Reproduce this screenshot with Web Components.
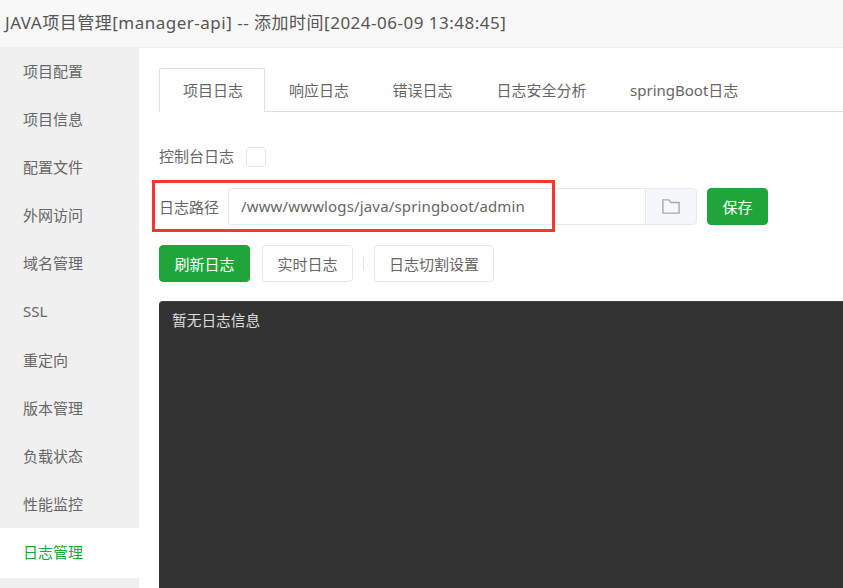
<!DOCTYPE html>
<html>
<head>
<meta charset="utf-8">
<style>
  html, body { margin: 0; height: 100%; overflow: hidden; background: #fff; }
  body { font-family: "Noto Sans", "Noto Sans CJK SC", sans-serif; font-size: 15px; color: #666; }
</style>
</head>
<body>
<project-dialog title-text="JAVA项目管理[manager-api] -- 添加时间[2024-06-09 13:48:45]">
  <side-menu slot="menu" active="日志管理" items="项目配置,项目信息,配置文件,外网访问,域名管理,SSL,重定向,版本管理,负载状态,性能监控,日志管理,"></side-menu>
  <log-panel></log-panel>
</project-dialog>

<script>
class ProjectDialog extends HTMLElement {
  constructor() {
    super();
    this.attachShadow({ mode: 'open' });
    this.shadowRoot.innerHTML = `
      <style>
        :host { display: flex; flex-direction: column; height: 588px; width: 843px; overflow: hidden; }
        .head { height: 42px; padding-bottom: 5px; flex: none; box-sizing: content-box; background: #f8f8f8; border-bottom: 1px solid #eee;
          display: flex; align-items: center; padding-left: 5px; font-size: 17px; letter-spacing: .5px; color: #555; white-space: nowrap; }
        .body { flex: 1; display: flex; min-height: 0; }
        .content { flex: 1; min-width: 0; padding: 20px 0 0 20px; overflow: hidden; }
      </style>
      <div class="head">${this.getAttribute('title-text')}</div>
      <div class="body">
        <slot name="menu"></slot>
        <div class="content"><slot></slot></div>
      </div>`;
  }
}

class SideMenu extends HTMLElement {
  connectedCallback() {
    const active = this.getAttribute('active');
    const items = this.getAttribute('items').split(',');
    const root = this.attachShadow({ mode: 'open' });
    root.innerHTML = `
      <style>
        :host { display: block; width: 139px; flex: none; background: #f0f0f0; }
        .item { height: 48.1px; line-height: 47px; padding-left: 23px; color: #666; box-sizing: border-box; }
        .item.on { background: #fff; color: #20a53a; margin-top: -1px; padding-top: 1px; height: 50px; }
      </style>
      ${items.map(i => `<div class="item ${i === active ? 'on' : ''}">${i}</div>`).join('')}`;
  }
}

class LogTabs extends HTMLElement {
  connectedCallback() {
    const root = this.attachShadow({ mode: 'open' });
    const tabs = ['项目日志', '响应日志', '错误日志', '日志安全分析', 'springBoot日志'];
    root.innerHTML = `
      <style>
        :host { display: flex; height: 44px; box-sizing: border-box; border-bottom: 1px solid #dcdfe6; }
        .tab { height: 44px; box-sizing: border-box; line-height: 43px; padding: 0 21px; color: #666; white-space: nowrap; border: 1px solid transparent; border-bottom: 0; }
        .tab.on { background: #fff; border-color: #dcdfe6; border-radius: 2px 2px 0 0; padding: 0 21px 0 23px; }
        .tab.second { padding: 0 20.5px 0 23px; }
        .tab.fourth { padding: 0 20.5px 0 21px; }
      </style>
      ${tabs.map((t, i) => `<div class="tab ${['on', 'second', '', 'fourth', ''][i]}">${t}</div>`).join('')}`;
  }
}

class GreenButton extends HTMLElement {
  constructor() {
    super();
    this.attachShadow({ mode: 'open' }).innerHTML = `
      <style>
        :host { display: inline-flex; align-items: center; justify-content: center; box-sizing: border-box; height: 37px; padding: 0 14.5px;
          border: 1px solid #e4e7ed; border-radius: 4px; background: #fff; color: #666; white-space: nowrap; }
        :host([primary]) { background: #20a53a; border-color: #20a53a; color: #fff; }
      </style>
      <slot></slot>`;
  }
}

class LogPanel extends HTMLElement {
  constructor() {
    super();
    this.attachShadow({ mode: 'open' }).innerHTML = `
      <style>
        :host { display: block; position: relative; }
        .check-row { display: flex; align-items: center; height: 20px; margin-top: 35px; color: #666; }
        .check-row span:first-child { margin-top: -4px; }
        .check { width: 20px; height: 20px; box-sizing: border-box; margin-left: 12px; border: 1px solid #e4e7ed; border-radius: 3px; background: #fff; }
        .path-row { display: flex; align-items: center; margin-top: 21px; height: 37px; }
        .label { width: 69px; flex: none; color: #666; }
        .input { width: 417px; height: 37px; box-sizing: border-box; padding-left: 12px; line-height: 35px; letter-spacing: .15px; border: 1px solid #e8eaef; border-right: 0; border-radius: 4px 0 0 4px; color: #666; }
        .pick { width: 52px; height: 37px; box-sizing: border-box; border: 1px solid #e8eaef; border-radius: 0 4px 4px 0; background: #f5f7fa; display: flex; align-items: center; justify-content: center; }
        .save { margin-left: 10px; width: 61px; padding: 0; }
        .tools { display: flex; align-items: center; margin-top: 20px; }
        .tools .rt { margin-left: 12px; }
        .sep { width: 1px; height: 13px; background: #dcdfe6; margin: 0 10px; }
        .log { margin-top: 19px; height: 400px; background: #333; border-radius: 4px 0 0 0; border-top: 1px solid #444; box-sizing: border-box; padding: 8px 13px; color: #dcdcdc; font-size: 14.7px; line-height: 20px; }
        .mark { position: absolute; left: -7px; top: 112px; width: 403px; height: 52px; box-sizing: border-box; border: 3px solid #fb3333; pointer-events: none; }
      </style>
      <log-tabs></log-tabs>
      <div class="check-row"><span>控制台日志</span><span class="check"></span></div>
      <div class="path-row">
        <span class="label">日志路径</span>
        <div class="input">/www/wwwlogs/java/springboot/admin</div>
        <div class="pick">
          <svg width="18" height="15" viewBox="0 0 18 15" fill="none" stroke="#a9a9ae" stroke-width="1.4"><path d="M.9.9h6l2 2.6h8.2v10.6H.9z"/></svg>
        </div>
        <green-button class="save" primary>保存</green-button>
      </div>
      <div class="tools">
        <green-button primary>刷新日志</green-button>
        <green-button class="rt">实时日志</green-button>
        <span class="sep"></span>
        <green-button style="padding:0 14px">日志切割设置</green-button>
      </div>
      <div class="log">暂无日志信息</div>
      <div class="mark"></div>`;
  }
}

customElements.define('project-dialog', ProjectDialog);
customElements.define('side-menu', SideMenu);
customElements.define('log-tabs', LogTabs);
customElements.define('green-button', GreenButton);
customElements.define('log-panel', LogPanel);
</script>
</body>
</html>
